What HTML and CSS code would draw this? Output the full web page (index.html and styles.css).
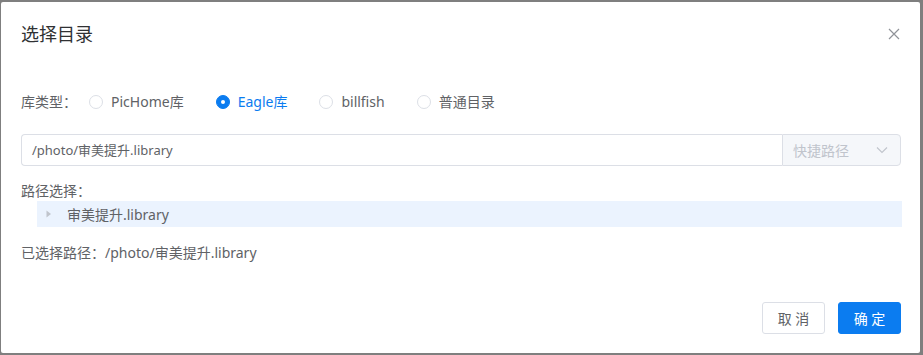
FILE: index.html
```html
<!DOCTYPE html>
<html lang="zh">
<head>
<meta charset="utf-8">
<title>选择目录</title>
<link rel="stylesheet" href="styles.css">
</head>
<body>
<div class="dialog">
  <div class="header">
    <span class="title">选择目录</span>
    <button class="close" aria-label="关闭">
      <svg width="12" height="12" viewBox="0 0 12 12"><path d="M1 1L11 11M11 1L1 11" stroke="#909399" stroke-width="1.2" fill="none"/></svg>
    </button>
  </div>
  <div class="body">
    <div class="radio-row">
      <span class="row-label">库类型：</span>
      <label class="radio"><span class="dot"></span><span class="rtext">PicHome库</span></label>
      <label class="radio checked"><span class="dot"></span><span class="rtext">Eagle库</span></label>
      <label class="radio"><span class="dot"></span><span class="rtext">billfish</span></label>
      <label class="radio"><span class="dot"></span><span class="rtext">普通目录</span></label>
    </div>
    <div class="input-group">
      <div class="input">/photo/审美提升.library</div>
      <div class="select">
        <span>快捷路径</span>
        <svg width="12" height="8" viewBox="0 0 12 8"><path d="M1 1.5L6 6.5L11 1.5" stroke="#c0c4cc" stroke-width="1.1" fill="none"/></svg>
      </div>
    </div>
    <div class="label-line">路径选择：</div>
    <div class="tree-row">
      <svg class="caret" width="6" height="8" viewBox="0 0 6 8"><path d="M0.5 0.5L5 4L0.5 7.5Z" fill="#c0c4cc"/></svg>
      <span>审美提升.library</span>
    </div>
    <div class="selected-line">已选择路径：/photo/审美提升.library</div>
  </div>
  <div class="footer">
    <button class="btn">取 消</button>
    <button class="btn primary">确 定</button>
  </div>
</div>
</body>
</html>
```
FILE: styles.css
```css
html, body {
  margin: 0;
  padding: 0;
}
body {
  background: #7f7f7f;
  width: 923px;
  height: 355px;
  overflow: hidden;
  font-family: "Noto Sans", "Noto Sans CJK SC", sans-serif;
}
.dialog {
  margin: 2px 0 0 1px;
  width: 919px;
  height: 351px;
  background: #fff;
  border-radius: 2px;
  box-sizing: border-box;
  display: flex;
  flex-direction: column;
}
.header {
  padding: 20px 20px 10px;
  display: flex;
  align-items: center;
  justify-content: space-between;
}
.title {
  font-size: 18px;
  line-height: 24px;
  color: #303133;
}
.close {
  border: 0;
  background: none;
  padding: 0;
  width: 12px;
  height: 12px;
  display: flex;
}
.body {
  padding: 36px 20px 0;
  font-size: 14px;
  color: #606266;
}
.radio-row {
  display: flex;
  align-items: center;
  height: 20px;
  line-height: 20px;
}
.row-label {
  width: 68px;
}
.radio {
  display: flex;
  align-items: center;
  margin-right: 32px;
  color: #606266;
}
.dot {
  width: 12px;
  height: 12px;
  border: 1px solid #dcdfe6;
  border-radius: 50%;
  margin-right: 8px;
  box-sizing: content-box;
  position: relative;
}
.radio.checked .dot {
  background: #0b7cf0;
  border-color: #0b7cf0;
}
.radio.checked .dot::after {
  content: "";
  position: absolute;
  width: 4px;
  height: 4px;
  border-radius: 50%;
  background: #fff;
  left: 4px;
  top: 4px;
}
.radio.checked .rtext {
  color: #0b7cf0;
}
.input-group {
  margin-top: 22px;
  display: flex;
  height: 32px;
  width: 880px;
}
.input {
  flex: 1;
  border: 1px solid #dcdfe6;
  border-right: 0;
  border-radius: 4px 0 0 4px;
  padding: 0 10px;
  line-height: 30px;
  font-size: 13px;
  color: #606266;
}
.select {
  width: 119px;
  box-sizing: border-box;
  border: 1px solid #dcdfe6;
  border-radius: 0 4px 4px 0;
  background: #f5f7fa;
  display: flex;
  align-items: center;
  justify-content: space-between;
  padding: 0 12px 0 10px;
  color: #c0c4cc;
}
.label-line {
  margin-top: 15px;
  line-height: 20px;
}
.tree-row {
  margin-left: 16px;
  width: 865px;
  height: 26px;
  background: #ebf3fe;
  display: flex;
  align-items: center;
  color: #606266;
}
.caret {
  margin-left: 9px;
  margin-right: 15px;
}
.selected-line {
  margin-top: 16px;
  line-height: 20px;
}
.footer {
  margin-top: auto;
  padding: 0 19px 19px 20px;
  display: flex;
  justify-content: flex-end;
  gap: 13px;
}
.btn {
  width: 63px;
  height: 32px;
  border: 1px solid #dcdfe6;
  background: #fff;
  border-radius: 3px;
  font-family: "Noto Sans", "Noto Sans CJK SC", sans-serif;
  font-size: 14px;
  color: #606266;
  padding: 0;
}
.btn.primary {
  background: #0b7cf0;
  border-color: #0b7cf0;
  color: #fff;
}
```
